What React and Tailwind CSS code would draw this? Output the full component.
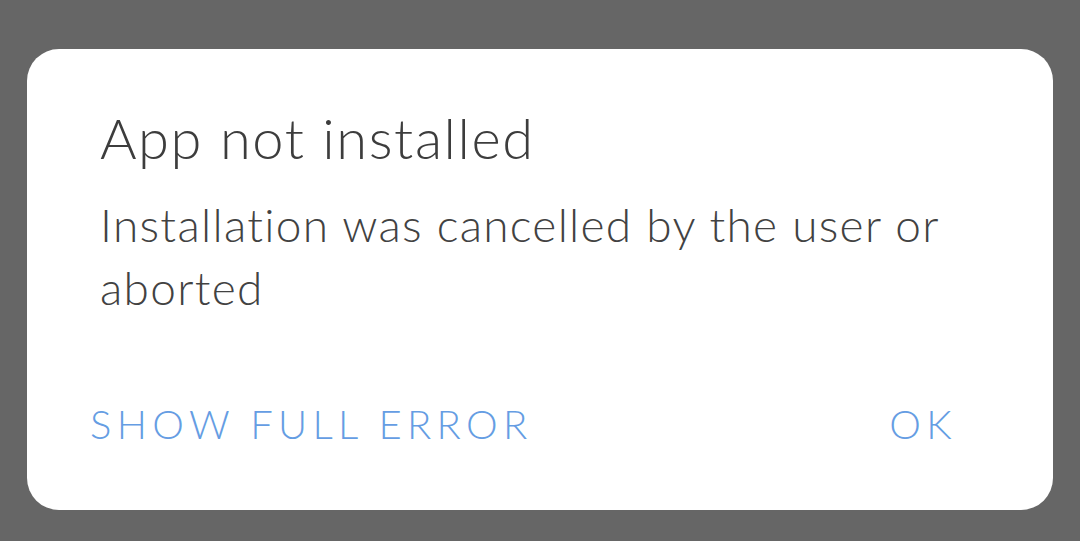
export default function App() {
  return (
    <div className="w-[1080px] h-[541px] bg-[#666666] pt-[49px] pl-[27px]" style={{ fontFamily: "Lato, 'Open Sans', sans-serif" }}>
      <div className="w-[1026px] h-[461px] bg-white rounded-[32px] flex flex-col">
        <div className="pl-[73px] pr-[60px] pt-[57px]">
          <h1 className="text-[56px] leading-[64px] text-[#3d3d3d] font-light tracking-[1.6px]">App not installed</h1>
          <p className="mt-[23px] w-[860px] text-[46px] leading-[63px] text-[#424242] font-light tracking-[1.3px]">Installation was cancelled by the user or aborted</p>
        </div>
        <div className="flex justify-between items-center pl-[63px] pr-[96px] mt-[80px]">
          <span className="text-[40px] leading-[50px] text-[#659de3] font-light tracking-[5.3px]">SHOW FULL ERROR</span>
          <span className="text-[40px] leading-[50px] text-[#659de3] font-light tracking-[5.3px]">OK</span>
        </div>
      </div>
    </div>
  );
}
